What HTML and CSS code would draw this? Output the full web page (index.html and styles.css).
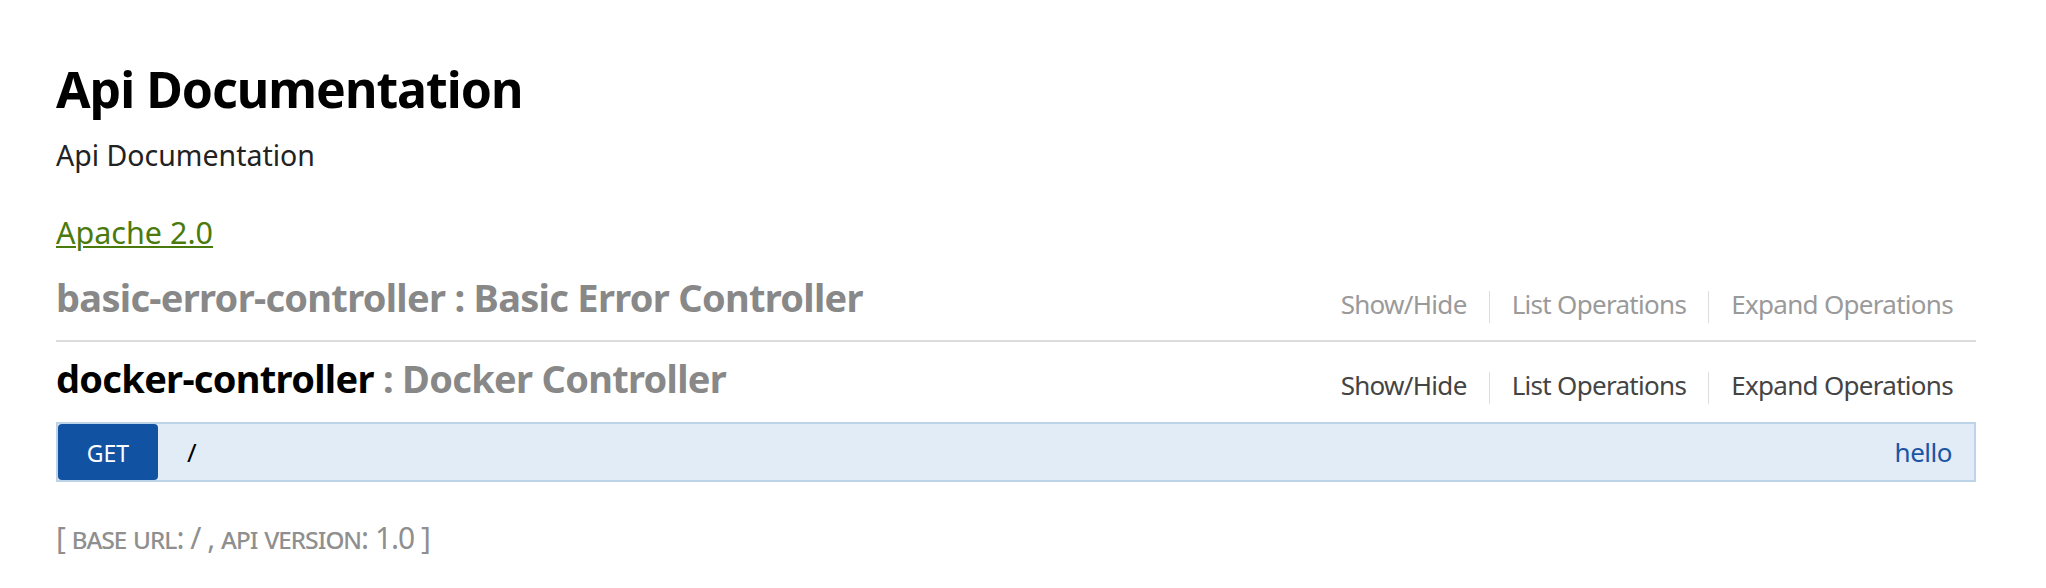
FILE: index.html
```html
<!DOCTYPE html>
<html lang="en">
<head>
<meta charset="utf-8">
<title>Swagger UI</title>
<link rel="stylesheet" href="styles.css">
</head>
<body>
<div class="wrap">
  <div class="info">
    <div class="info-title">Api Documentation</div>
    <div class="info-desc">Api Documentation</div>
    <div class="info-license"><a href="#">Apache 2.0</a></div>
  </div>

  <ul class="resources">
    <li class="resource">
      <div class="heading">
        <h2 class="res-title collapsed"><a href="#">basic-error-controller</a> : Basic Error Controller</h2>
        <ul class="options muted">
          <li><a href="#">Show/Hide</a></li>
          <li><a href="#">List Operations</a></li>
          <li><a href="#">Expand Operations</a></li>
        </ul>
      </div>
    </li>
    <li class="resource last">
      <div class="heading">
        <h2 class="res-title active"><a href="#">docker-controller</a> : Docker Controller</h2>
        <ul class="options">
          <li><a href="#">Show/Hide</a></li>
          <li><a href="#">List Operations</a></li>
          <li><a href="#">Expand Operations</a></li>
        </ul>
      </div>
      <ul class="operations">
        <li class="operation get">
          <div class="op-heading">
            <span class="http-method">GET</span>
            <span class="path">/</span>
            <span class="op-summary">hello</span>
          </div>
        </li>
      </ul>
    </li>
  </ul>

  <div class="footer">[ <span class="sc">base url</span>: / , <span class="sc">api version</span>: 1.0 ]</div>
</div>
</body>
</html>
```

FILE: styles.css
```css
* { box-sizing: border-box; }

html, body {
  margin: 0;
  padding: 0;
  background: #ffffff;
}

body {
  font-family: "Noto Sans", "Open Sans", sans-serif;
  color: #333333;
}

a { text-decoration: none; }

.wrap {
  width: 1920px;
  margin-left: 56px;
  padding-top: 64px;
}

/* info block */
.info-title {
  font-size: 50px;
  line-height: 50px;
  font-weight: bold;
  letter-spacing: -1px;
  color: #000000;
}

.info-desc {
  margin-top: 21px;
  font-size: 28.5px;
  line-height: 40px;
  color: #222222;
}

.info-license {
  margin-top: 37px;
  font-size: 30.5px;
  line-height: 40px;
}

.info-license a {
  color: #4b7a0c;
  text-decoration: underline;
  text-decoration-thickness: 2px;
  text-underline-offset: 2px;
}

/* resources */
.resources {
  list-style: none;
  margin: 9px 0 0 0;
  padding: 0;
}

.resource {
  border-bottom: 2px solid #dcdcdc;
}

.resource.last {
  border-bottom: none;
}

.heading {
  display: flex;
  justify-content: space-between;
  align-items: flex-start;
  height: 79px;
  padding-top: 17px;
}

.res-title {
  margin: 0;
  padding-left: 0;
  font-size: 38px;
  line-height: 38px;
  font-weight: bold;
  letter-spacing: -0.7px;
  color: #888888;
}

.res-title a { color: #888888; }
.res-title.active a { color: #000000; }

.options {
  list-style: none;
  margin: 13px 0 0 0;
  padding: 0;
  display: flex;
}

.options li {
  font-size: 26px;
  line-height: 26px;
  letter-spacing: -0.7px;
  padding: 0 22px 6px 22px;
  border-left: 1px solid #dddddd;
}

.options li:first-child { border-left: none; }
.options li:last-child { padding-right: 23px; }

.options a { color: #444444; }
.options.muted a { color: #9a9a9a; }

/* operations */
.operations {
  list-style: none;
  margin: 1px 0 0 0;
  padding: 0;
}

.op-heading {
  display: flex;
  align-items: center;
  height: 60px;
  background: #e2ecf6;
  border: 2px solid #bcd3ea;
}

.http-method {
  width: 100px;
  height: 56px;
  display: flex;
  align-items: center;
  justify-content: center;
  background: #1252a3;
  color: #ffffff;
  font-size: 23px;
  border-radius: 4px;
  padding-top: 2px;
}

.path {
  padding-left: 29px;
  font-size: 26px;
  color: #000000;
}

.op-summary {
  margin-left: auto;
  padding-right: 22px;
  font-size: 26px;
  letter-spacing: -0.5px;
  color: #1a55a4;
}

/* footer */
.footer {
  margin-top: 40px;
  font-size: 30px;
  line-height: 32px;
  letter-spacing: -1px;
  color: #8f8f8f;
}

.sc { font-variant: small-caps; }
```
